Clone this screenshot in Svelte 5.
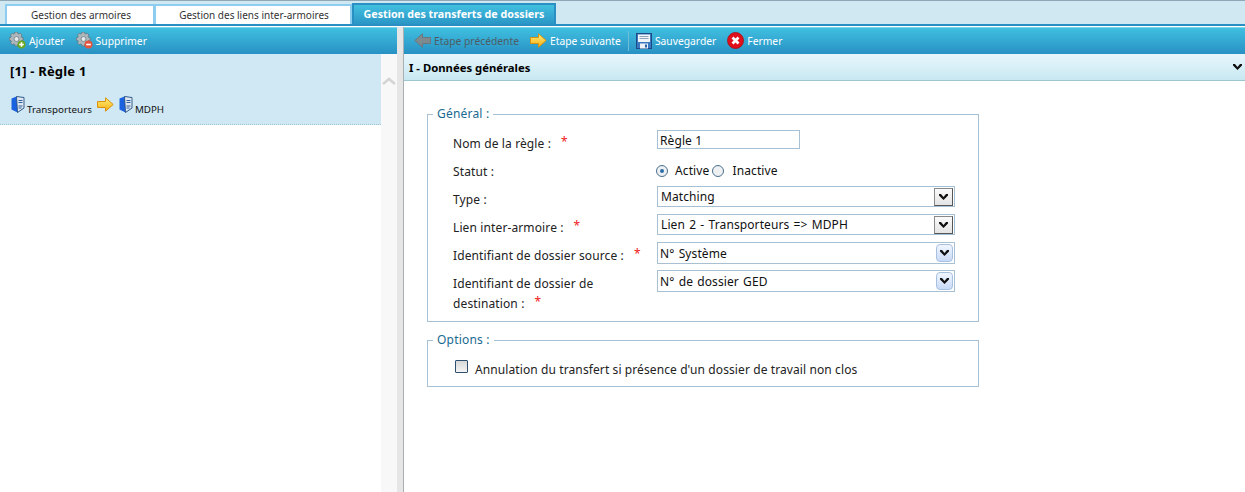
<script lang="ts">
  const tabs = [
    { label: 'Gestion des armoires', w: 150 },
    { label: 'Gestion des liens inter-armoires', w: 198 },
    { label: 'Gestion des transferts de dossiers', w: 204, active: true }
  ];
  const selects = [
    { label: 'Type :', value: 'Matching', req: false, kind: 'plain' },
    { label: 'Lien inter-armoire :', value: 'Lien 2 - Transporteurs => MDPH', req: true, kind: 'plain' },
    { label: 'Identifiant de dossier source :', value: 'N° Système', req: true, kind: 'soft' }
  ];
  const chevron = 'M0 0h2l2.500 3L7 0h2v1.500L4.500 6 0 1.500z';
</script>

{#snippet gear(minus)}
  <svg class="ico" width="17" height="17" viewBox="0 0 17 17">
    <path d="M5.500 0h3l.4 1.900 1.300.6 1.700-1 2.100 2.100-1 1.700.6 1.300 1.900.4v3l-1.900.4-.6 1.300 1 1.700-2.100 2.100-1.700-1-1.300.6-.4 1.900h-3l-.4-1.900-1.300-.6-1.700 1L0 13.400l1-1.700-.6-1.300L-1.500 10V7l1.900-.4.600-1.300-1-1.700L2.100 1.500l1.700 1 1.300-.6z" transform="translate(1.500 0) scale(.82)" fill="#aeb8bc" stroke="#5a686e" stroke-width=".8"/>
    <circle cx="7.500" cy="7" r="2.500" fill="#e6ecee" stroke="#6a787e" stroke-width=".8"/>
    <circle cx="12.500" cy="12.500" r="4" fill={minus ? '#e2553f' : '#6aa820'}/>
    <rect x="10.200" y="11.700" width="4.600" height="1.600" fill="#fff"/>
    {#if !minus}<rect x="11.700" y="10.200" width="1.600" height="4.600" fill="#fff"/>{/if}
  </svg>
{/snippet}

{#snippet arrow(gray, left)}
  <svg class="ico" width="17" height="15" viewBox="0 0 17 15">
    <defs>
      <linearGradient id="ay" x1="0" y1="0" x2="0" y2="1">
        <stop offset="0" stop-color="#fff07a" /><stop offset="1" stop-color="#f7ac12" />
      </linearGradient>
    </defs>
    <path d={left ? 'M16.500 4.500H8.500V.8L.8 7.500l7.700 6.700v-3.700h8z' : 'M.5 4.500h8V.8l7.700 6.700-7.700 6.700v-3.700h-8z'}
      fill={gray ? '#7d8a90' : 'url(#ay)'} stroke={gray ? '#6b777c' : '#d9920c'}/>
  </svg>
{/snippet}

{#snippet cabinet()}
  <svg class="cab" width="14" height="17" viewBox="0 0 14 17">
    <path d="M.5 2.500 5.500.5l7.500 1v10.500l-6.500 4.500-6-3z" fill="#1a62e0"/>
    <path d="M5.500.5l7.500 1v10.500l-6.500 4.500z" fill="#dfe8f2" stroke="#27507f" stroke-width=".9"/>
    <path d="M7.500 4.500h4M7.500 6.500h4M7.500 10h4M7.500 12h3" stroke="#2f5f9a"/>
  </svg>
{/snippet}

<div class="page">
  <div class="tabbar">
    {#each tabs as t}
      <div class="tab" class:active={t.active} style="width:{t.w}px">{t.label}</div>
    {/each}
  </div>

  <div class="main">
    <div class="left">
      <div class="toolbar">
        <span class="tool">{@render gear(false)}Ajouter</span>
        <span class="tool">{@render gear(true)}Supprimer</span>
      </div>
      <div class="listwrap">
        <div class="list">
          <div class="rule">
            <div class="rule-title">[1] - Règle 1</div>
            <div class="rule-path">
              {@render cabinet()}<span class="name">Transporteurs</span>
              <span class="path-arrow">{@render arrow(false, false)}</span>
              {@render cabinet()}<span class="name">MDPH</span>
            </div>
          </div>
        </div>
        <div class="scroll">
          <svg width="14" height="8" viewBox="0 0 14 8"><path d="M1 7l6-5 6 5" fill="none" stroke="#d4d4d4" stroke-width="2.500"/></svg>
        </div>
      </div>
    </div>

    <div class="splitter"></div>

    <div class="right">
      <div class="toolbar">
        <span class="tool off">{@render arrow(true, true)}Etape précédente</span>
        <span class="tool">{@render arrow(false, false)}Etape suivante</span>
        <span class="sep"></span>
        <span class="tool">
          <svg class="ico" width="16" height="16" viewBox="0 0 16 16">
            <rect x=".5" y=".5" width="15" height="15" fill="#3a78c0" stroke="#1d4a84"/>
            <rect x="2" y="1.500" width="12" height="7.500" fill="#f2f6fa"/>
            <path d="M3.500 3.500h9M3.500 5.500h9" stroke="#8fa4b8"/>
            <rect x="4" y="10.500" width="8" height="5" fill="#eef2f6"/>
            <rect x="9" y="11.500" width="2" height="3" fill="#2a62a8"/>
          </svg>Sauvegarder
        </span>
        <span class="tool">
          <svg class="ico" width="17" height="17" viewBox="0 0 17 17">
            <circle cx="8.500" cy="8.500" r="8" fill="#e0101c" stroke="#a50c14" stroke-width=".8"/>
            <path d="M5.500 5.500l6 6M11.500 5.500l-6 6" stroke="#fff" stroke-width="2.800"/>
          </svg>Fermer
        </span>
      </div>

      <div class="section">
        <span>I - Données générales</span>
        <svg width="9" height="6" viewBox="0 0 9 6"><path d={chevron} fill="#111"/></svg>
      </div>

      <div class="content">
        <fieldset class="general">
          <legend>Général :</legend>
          <div class="form">
            <div class="lbl">Nom de la règle :<i>*</i></div>
            <div class="val"><div class="input">Règle 1</div></div>

            <div class="lbl">Statut :</div>
            <div class="val radios">
              <span class="radio on"></span><span class="r1">Active</span>
              <span class="radio"></span><span class="r2">Inactive</span>
            </div>

            {#each selects as s}
              <div class="lbl">{s.label}{#if s.req}<i>*</i>{/if}</div>
              <div class="val">
                <div class="select" class:soft={s.kind === 'soft'}>
                  <span>{s.value}</span>
                  <span class="btn">
                    <svg width="9" height="6" viewBox="0 0 9 6"><path d={chevron} fill="#111"/></svg>
                  </span>
                </div>
              </div>
            {/each}

            <div class="lbl tall">Identifiant de dossier de<br />destination :<i>*</i></div>
            <div class="val tall">
              <div class="select soft">
                <span>N° de dossier GED</span>
                <span class="btn">
                  <svg width="9" height="6" viewBox="0 0 9 6"><path d={chevron} fill="#111"/></svg>
                </span>
              </div>
            </div>
          </div>
        </fieldset>

        <fieldset class="options">
          <legend>Options :</legend>
          <div class="check"><span class="box"></span><span class="check-text">Annulation du transfert si présence d'un dossier de travail non clos</span></div>
        </fieldset>
      </div>
    </div>
  </div>
</div>

<style>
  :global(body) { margin: 0; background: #fff; }
  .page { width: 1245px; height: 492px; overflow: hidden; display: flex; flex-direction: column;
          font-family: "Noto Sans", sans-serif; font-size: 12px; color: #111; }

  .tabbar { height: 23px; flex: none; padding-left: 5px; display: flex; align-items: flex-end;
            background: #d0e8f2; border-top: 1px solid #8ea8b8; border-bottom: 2px solid #2a90c4;
            box-shadow: 0 1px 0 #fff; margin-bottom: 1px; }
  .tab { height: 20px; box-sizing: border-box; background: #fff; border: 2px solid #8ccdf0; border-bottom: 0;
         margin-right: -1px; padding-left: 2px; text-align: center; line-height: 18px; font-size: 10px; color: #333; }
  .tab.active { height: 21px; margin-left: 1px; padding-left: 0; font-size: 10.700px; font-weight: bold; color: #fff;
                border-color: #2a90c4; background: linear-gradient(#42c0e0, #2a96c6); }

  .main { flex: 1; display: flex; min-height: 0; }
  .left { width: 397px; flex: none; display: flex; flex-direction: column; }
  .splitter { width: 7px; flex: none; box-sizing: border-box; background: #e6e6e6; border-right: 1px solid #a8b0b4; }
  .right { flex: 1; min-width: 0; display: flex; flex-direction: column; }

  .toolbar { height: 27px; flex: none; display: flex; align-items: center; padding-left: 10px; gap: 11px;
             background: linear-gradient(#41c1e1, #2891c4); box-shadow: inset 0 1px 0 #7fd8ec;
             color: #fff; font-size: 10.300px; }
  .left .toolbar { padding-left: 9px; }
  .tool { display: flex; align-items: center; gap: 3px; }
  .tool.off { color: #4d5d66; }
  .ico { flex: none; display: block; }
  .sep { width: 1px; height: 20px; background: #6fbcd8; margin: 0 -4px; }

  .listwrap { flex: 1; display: flex; min-height: 0; }
  .list { flex: 1; background: #fff; }
  .rule { height: 71px; box-sizing: border-box; background: #cfe8f3; border-bottom: 1px dotted #9fc4d4; padding: 9px 10px 0; }
  .rule-title { font-weight: bold; font-size: 13px; letter-spacing: .2px; line-height: 17px; color: #000; }
  .rule-path { display: flex; align-items: flex-start; margin-top: 16px; padding-left: 1px; font-size: 9.800px; color: #111; }
  .name { padding-top: 7px; margin-left: 2px; line-height: 14px; }
  .path-arrow { margin: 1px 5px 0 5px; }
  .cab { flex: none; }
  .scroll { width: 16px; flex: none; background: #f8f8f8; padding-top: 18px; box-sizing: border-box; text-align: center; }

  .section { height: 27px; flex: none; box-sizing: border-box; display: flex; align-items: center; justify-content: space-between;
             padding: 0 3px 0 5px; background: linear-gradient(#e8f6fc, #c8e8f2); border-bottom: 1px solid #9cc6d0;
             font-weight: bold; font-size: 11.300px; color: #000; }

  .content { flex: 1; padding: 25px 0 0 23px; }
  fieldset { width: 552px; margin: 0; box-sizing: border-box; border: 1px solid #a8c0d4; }
  legend { padding: 0 4px; line-height: 16px; font-size: 12px; letter-spacing: .2px; color: #1a6a90; }
  .general { height: 216px; padding: 7px 22px 0 25px; }
  .general legend { margin-left: -20px; }
  .options { height: 55px; margin-top: 10px; padding: 11px 0 0 27px; }
  .options legend { margin-left: -22px; }

  .form { display: grid; grid-template-columns: 204px 298px; grid-auto-rows: 28px; }
  .lbl { line-height: 28px; padding-top: 1px; box-sizing: border-box; color: #222; white-space: nowrap; letter-spacing: .12px; }
  .lbl i { color: #f02020; font-style: normal; margin-left: 10px; line-height: 0; vertical-align: 2px; }
  .lbl.tall { line-height: 20px; grid-row: span 2; padding-top: 5px; }
  .val.tall { grid-row: span 2; }
  .val { display: flex; align-items: flex-start; padding-top: 1px; }
  .input { width: 143px; height: 19px; box-sizing: border-box; border: 1px solid #a8c0d4; padding: 1px 0 0 2px; line-height: 17px; letter-spacing: .1px; }
  .radios { align-items: center; height: 25px; margin-left: -1px; letter-spacing: .12px; }
  .radio { width: 12px; height: 12px; flex: none; box-sizing: border-box; border-radius: 50%; border: 1px solid #4a7090; background: #eef0f2; position: relative; }
  .radio.on::after { content: ""; position: absolute; left: 3px; top: 3px; width: 4px; height: 4px; border-radius: 50%; background: #2a70a8; }
  .r1 { margin: 0 3px 0 7px; }
  .r2 { margin-left: 8px; }

  .select { width: 300px; height: 21px; box-sizing: border-box; border: 1px solid #a8c0d4; display: flex; align-items: center;
            justify-content: space-between; padding: 0 1px 0 3px; letter-spacing: .1px; word-spacing: 1px; }
  .select.soft { width: 298px; height: 22px; padding-left: 2px; }
  .btn { width: 19px; height: 18px; box-sizing: border-box; display: flex; align-items: center; justify-content: center;
         background: linear-gradient(#fafafa, #e4e4e4); border: 1px solid #8a8a8a; border-right-color: #555; border-bottom-color: #555; }
  .soft .btn { border-radius: 4px; border: 1px solid #a8c0e0; background: linear-gradient(#f0f6ff, #c8daf6); height: 18px; width: 17px; }

  .check { display: flex; align-items: flex-start; color: #222; line-height: 18px; letter-spacing: .1px; }
  .box { width: 13px; height: 13px; flex: none; box-sizing: border-box; border: 1px solid #2f4f6f; border-radius: 1px; background: linear-gradient(#d8d8d8, #f4f4f4); margin: 1px 7px 0 0; }
  .check-text { padding-top: 2px; }
</style>
